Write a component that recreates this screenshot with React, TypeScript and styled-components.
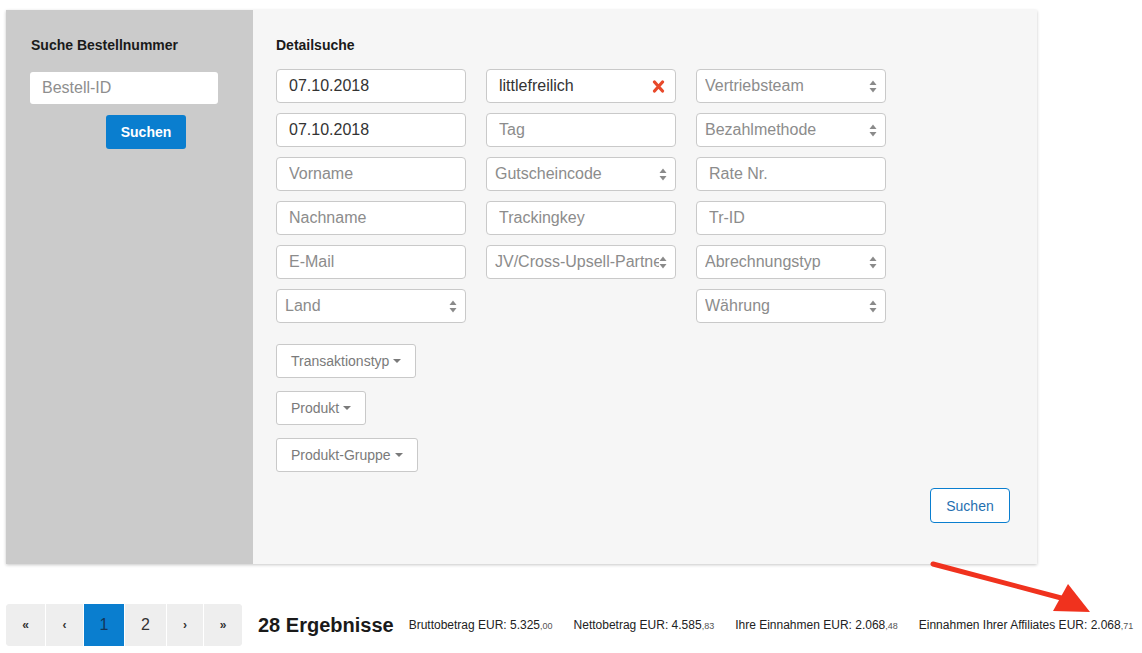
import React from "react";
import styled, { createGlobalStyle } from "styled-components";

const GlobalStyle = createGlobalStyle`
  body {
    margin: 0;
    background: #ffffff;
    font-family: "Liberation Sans", Arial, sans-serif;
    color: #333333;
  }
`;

const Page = styled.div`
  position: relative;
  width: 1142px;
  height: 653px;
  padding: 10px 0 0 6px;
  box-sizing: border-box;
`;

const SearchPanel = styled.div`
  display: flex;
  width: 1031px;
  height: 554px;
  box-shadow: 0 1px 3px rgba(0, 0, 0, 0.22);
`;

const Sidebar = styled.div`
  width: 247px;
  background: #cbcbcb;
  padding: 27px 0 0 25px;
  box-sizing: border-box;
  display: flex;
  flex-direction: column;
  align-items: flex-start;
`;

const Title = styled.h3`
  margin: 0;
  font-size: 14px;
  line-height: 16px;
  font-weight: bold;
  color: #1a1a1a;
`;

const SideInput = styled.div`
  margin: 19px 0 0 -1px;
  width: 188px;
  height: 32px;
  background: #ffffff;
  border-radius: 3px;
  box-sizing: border-box;
  padding-left: 12px;
  display: flex;
  align-items: center;
  font-size: 16px;
  color: #8e8e8e;
`;

const PrimaryButton = styled.button`
  margin: 11px 0 0 75px;
  width: 80px;
  height: 34px;
  border: none;
  border-radius: 3px;
  background: #0a7ecf;
  color: #ffffff;
  font-family: inherit;
  font-size: 14px;
  font-weight: bold;
`;

const Main = styled.div`
  flex: 1;
  background: #f6f6f6;
  padding: 27px 27px 0 23px;
  box-sizing: border-box;
  display: flex;
  flex-direction: column;
`;

const FieldGrid = styled.div`
  margin-top: 16px;
  display: grid;
  grid-template-columns: repeat(3, 190px);
  grid-auto-rows: 34px;
  column-gap: 20px;
  row-gap: 10px;
`;

const Field = styled.div<{ $select?: boolean; $value?: boolean }>`
  position: relative;
  background: #ffffff;
  border: 1px solid #c9c9c9;
  border-radius: 4px;
  box-sizing: border-box;
  display: flex;
  align-items: center;
  padding-left: ${({ $select }) => ($select ? "8px" : "12px")};
  padding-right: 8px;
  font-size: 16px;
  color: ${({ $value }) => ($value ? "#333333" : "#8c8c8c")};
  white-space: nowrap;
  overflow: hidden;
`;

const FieldText = styled.span`
  flex: 1;
  overflow: hidden;
`;

const Spinner = () => (
  <svg width="8" height="13" viewBox="0 0 8 13" style={{ flexShrink: 0 }}>
    <path d="M4 0.5 L7.5 5 H0.5 Z" fill="#8a8a8a" />
    <path d="M4 12.5 L7.5 8 H0.5 Z" fill="#8a8a8a" />
  </svg>
);

const ClearIcon = () => (
  <svg width="13" height="13" viewBox="0 0 13 13" style={{ flexShrink: 0, marginRight: 2 }}>
    <path d="M2.5 2 L10.5 11 M10.5 2 L2.5 11" stroke="#e8492b" strokeWidth="3.2" strokeLinecap="round" />
  </svg>
);

const DropdownStack = styled.div`
  margin-top: 21px;
  display: flex;
  flex-direction: column;
  align-items: flex-start;
  gap: 13px;
`;

const DropdownButton = styled.button`
  height: 34px;
  padding: 0 14px 0 14px;
  background: #ffffff;
  border: 1px solid #c9c9c9;
  border-radius: 3px;
  font-family: inherit;
  font-size: 14px;
  color: #7a7a7a;
  display: flex;
  align-items: center;
  gap: 4px;
`;

const Caret = styled.span`
  width: 0;
  height: 0;
  border-left: 4px solid transparent;
  border-right: 4px solid transparent;
  border-top: 4px solid #7a7a7a;
`;

const SubmitRow = styled.div`
  margin-top: 16px;
  display: flex;
  justify-content: flex-end;
`;

const OutlineButton = styled.button`
  width: 80px;
  height: 35px;
  background: #ffffff;
  border: 1px solid #0a7ecf;
  border-radius: 4px;
  color: #1f6fb0;
  font-family: inherit;
  font-size: 14px;
`;

const Footer = styled.div`
  margin-top: 40px;
  display: flex;
  align-items: center;
  white-space: nowrap;
`;

const Pager = styled.div`
  display: flex;
  flex-shrink: 0;
  height: 42px;
  border-radius: 4px;
  overflow: hidden;
  background: #eeeeee;
`;

const PageItem = styled.div<{ $active?: boolean; $w: number; $small?: boolean }>`
  width: ${({ $w }) => $w}px;
  flex-shrink: 0;
  box-sizing: border-box;
  display: flex;
  align-items: center;
  justify-content: center;
  border-left: 1px solid #ffffff;
  background: ${({ $active }) => ($active ? "#0a7ecf" : "#eeeeee")};
  color: ${({ $active }) => ($active ? "#12365a" : "#333333")};
  font-size: ${({ $small }) => ($small ? "12px" : "16px")};
  font-weight: ${({ $small }) => ($small ? "bold" : "normal")};
  &:first-child {
    border-left: none;
  }
`;

const ResultCount = styled.div`
  margin-left: 16px;
  flex-shrink: 0;
  font-size: 20px;
  font-weight: bold;
  color: #1a1a1a;
`;

const Stats = styled.div`
  margin-left: 15px;
  flex-shrink: 0;
  display: flex;
  gap: 21px;
  font-size: 12px;
  color: #222222;
`;

const Cents = styled.span`
  font-size: 9px;
  color: #555555;
`;

const Arrow = styled.svg`
  position: absolute;
  left: 925px;
  top: 555px;
`;

type Cell = { text: string; select?: boolean; value?: boolean; clear?: boolean } | null;

const cells: Cell[] = [
  { text: "07.10.2018", value: true },
  { text: "littlefreilich", value: true, clear: true },
  { text: "Vertriebsteam", select: true },
  { text: "07.10.2018", value: true },
  { text: "Tag" },
  { text: "Bezahlmethode", select: true },
  { text: "Vorname" },
  { text: "Gutscheincode", select: true },
  { text: "Rate Nr." },
  { text: "Nachname" },
  { text: "Trackingkey" },
  { text: "Tr-ID" },
  { text: "E-Mail" },
  { text: "JV/Cross-Upsell-Partner", select: true },
  { text: "Abrechnungstyp", select: true },
  { text: "Land", select: true },
  null,
  { text: "Währung", select: true },
];

const stats = [
  ["Bruttobetrag EUR: 5.325", ",00"],
  ["Nettobetrag EUR: 4.585", ",83"],
  ["Ihre Einnahmen EUR: 2.068", ",48"],
  ["Einnahmen Ihrer Affiliates EUR: 2.068", ",71"],
];

export default function App() {
  return (
    <Page>
      <GlobalStyle />
      <SearchPanel>
        <Sidebar>
          <Title>Suche Bestellnummer</Title>
          <SideInput>Bestell-ID</SideInput>
          <PrimaryButton>Suchen</PrimaryButton>
        </Sidebar>
        <Main>
          <Title>Detailsuche</Title>
          <FieldGrid>
            {cells.map((c, i) =>
              c ? (
                <Field key={i} $select={c.select} $value={c.value}>
                  <FieldText>{c.text}</FieldText>
                  {c.select && <Spinner />}
                  {c.clear && <ClearIcon />}
                </Field>
              ) : (
                <div key={i} />
              )
            )}
          </FieldGrid>
          <DropdownStack>
            <DropdownButton>
              Transaktionstyp <Caret />
            </DropdownButton>
            <DropdownButton>
              Produkt <Caret />
            </DropdownButton>
            <DropdownButton>
              Produkt-Gruppe <Caret />
            </DropdownButton>
          </DropdownStack>
          <SubmitRow>
            <OutlineButton>Suchen</OutlineButton>
          </SubmitRow>
        </Main>
      </SearchPanel>
      <Footer>
        <Pager>
          <PageItem $w={39} $small>«</PageItem>
          <PageItem $w={38} $small>‹</PageItem>
          <PageItem $w={41} $active>1</PageItem>
          <PageItem $w={42}>2</PageItem>
          <PageItem $w={37} $small>›</PageItem>
          <PageItem $w={39} $small>»</PageItem>
        </Pager>
        <ResultCount>28 Ergebnisse</ResultCount>
        <Stats>
          {stats.map(([main, cents]) => (
            <span key={main}>
              {main}
              <Cents>{cents}</Cents>
            </span>
          ))}
        </Stats>
      </Footer>
      <Arrow width="180" height="70" viewBox="0 0 180 70">
        <path d="M8 9 L140 44" stroke="#f0321e" strokeWidth="5" strokeLinecap="round" />
        <path d="M165 57 L128 56 L143 29 Z" fill="#f0321e" />
      </Arrow>
    </Page>
  );
}
